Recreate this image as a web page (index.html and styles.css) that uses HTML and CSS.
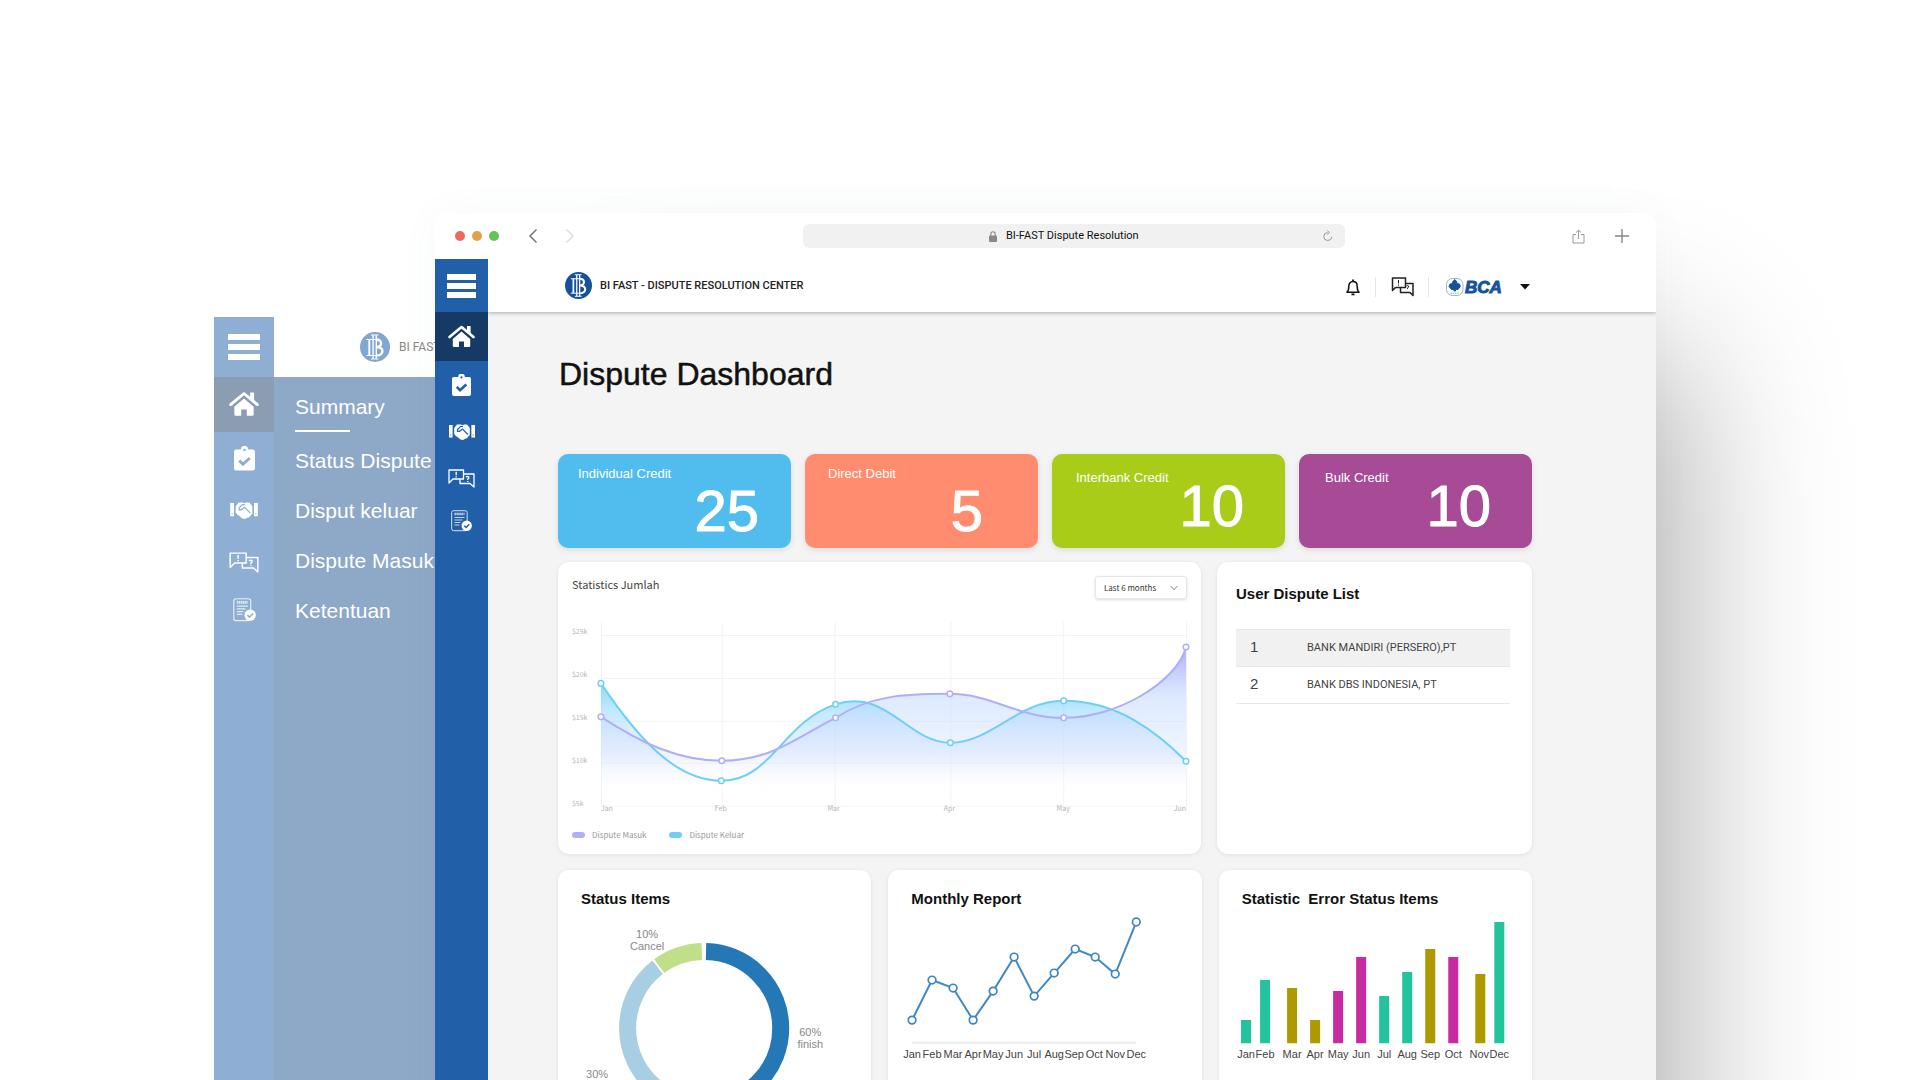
FILE: index.html
```html
<!DOCTYPE html>
<html lang="en">
<head>
<meta charset="utf-8">
<meta name="viewport" content="width=device-width, initial-scale=1">
<title>BI-FAST Dispute Resolution</title>
<link rel="stylesheet" href="styles.css">
</head>
<body>
<svg class="sprite" aria-hidden="true">
  <symbol id="i-home" viewBox="0 0 27 22">
    <path d="M19 1h3.600v8l-3.600-3z" fill="currentColor"/>
    <path d="M1.500 12 13.500 2l12 10" fill="none" stroke="currentColor" stroke-width="2.600" stroke-linecap="round" stroke-linejoin="round"/>
    <path d="M4.800 13.900 13.500 6.500l8.700 7.400V21a1 1 0 0 1-1 1H16v-5.500h-5V22H5.800a1 1 0 0 1-1-1z" fill="currentColor"/>
  </symbol>
  <symbol id="i-task" viewBox="0 0 20 23">
    <path d="M2 3h4.500a3.500 3.500 0 0 1 7 0H18a2 2 0 0 1 2 2v16a2 2 0 0 1-2 2H2a2 2 0 0 1-2-2V5a2 2 0 0 1 2-2z" fill="currentColor"/>
    <circle cx="10" cy="3.500" r="1.200" fill="var(--bar)"/>
    <path d="m5 13.500 3.500 3.500 6.500-6" fill="none" stroke="var(--bar)" stroke-width="2.800"/>
  </symbol>
  <symbol id="i-shake" viewBox="0 0 26 16">
    <path d="M0 1h3.600v12.500H0zM22.400 1H26v12.500h-3.600z" fill="currentColor"/>
    <path d="M1.300 11h1M23.700 11h1" stroke="var(--bar)"/>
    <path d="M5.200 4 8 .500h4l1.500.700L15 .500h3l2.800 3.500V11l-1.300 1.300-1.500 2-2 .500-2 1.200-2.500-.500L9 13.500 6.800 12 5.200 10z" fill="currentColor"/>
    <path d="M14 2.500h-2.500L8.500 5.500v1.800h2l3-2.300 5.500 5.500" fill="none" stroke="var(--bar)" stroke-width="1.200"/>
  </symbol>
  <symbol id="i-chat" viewBox="0 0 27 19">
    <g fill="none" stroke="currentColor" stroke-width="1.300" stroke-linejoin="round">
      <path d="M12 10H5L1 14V1h14.500v4"/>
      <path d="M15.500 5H26v13l-4-3.500H12V10h3.500z"/>
      <path d="M8.200 2.800v3.400M8.200 7.200v1.200M18 8q1.500-1 2.800 0 .5 1-1 2v1M19.800 12v1"/>
    </g>
  </symbol>
  <symbol id="i-doc" viewBox="0 0 21 22">
    <rect x=".700" y=".700" width="15.500" height="20" rx="2" fill="none" stroke="currentColor" opacity=".8"/>
    <path d="M3.500 4h10" stroke="currentColor" stroke-width="2.400" stroke-dasharray="1.400 .5" opacity=".75"/>
    <path d="M3.500 7.500h10M3.500 10h8M3.500 12.500h6M3.500 15h5" stroke="currentColor" stroke-width="1.100" opacity=".75"/>
    <circle cx="15.700" cy="15.700" r="5.200" fill="currentColor"/>
    <path d="m13.200 15.700 1.900 1.800 3.200-3.300" fill="none" stroke="var(--bar)" stroke-width="1.400"/>
  </symbol>
  <symbol id="i-bi" viewBox="0 0 28 28">
    <circle cx="14" cy="14" r="14" fill="currentColor"/>
    <g fill="none" stroke="#fff">
      <path d="M12.200 3v22M15.200 3v22" stroke-width="1.300"/>
      <path d="M10.200 2.800h7M10.200 25.200h7M6 7h9.500M6 22h11" stroke-width="1"/>
      <path d="M8.700 7v15" stroke-width="1.800"/>
      <path d="M15 7c6 0 6.500 7 0 7M15 14c8 0 7.500 8 1 8" stroke-width="2.200"/>
    </g>
  </symbol>
</svg>

<div class="stage">
  <section class="back-window" aria-label="Expanded menu">
    <nav class="rail rail--soft">
      <button class="burger" type="button" aria-label="Menu"><span></span><span></span><span></span></button>
      <a class="rail-item rail-item--active" href="#summary" aria-label="Summary"><svg class="ic-home"><use href="#i-home"/></svg></a>
      <a class="rail-item" href="#status" aria-label="Status Dispute"><svg class="ic-task"><use href="#i-task"/></svg></a>
      <a class="rail-item" href="#keluar" aria-label="Disput keluar"><svg class="ic-shake"><use href="#i-shake"/></svg></a>
      <a class="rail-item" href="#masuk" aria-label="Dispute Masuk"><svg class="ic-chat"><use href="#i-chat"/></svg></a>
      <a class="rail-item rail-item--last" href="#ketentuan" aria-label="Ketentuan"><svg class="ic-doc"><use href="#i-doc"/></svg></a>
    </nav>
    <div class="back-body">
      <div class="back-header">
        <svg class="bi-logo"><use href="#i-bi"/></svg>
        <span class="brand-text">BI FAST - DISPUTE RESOLUTION CENTER</span>
      </div>
      <ul class="menu">
        <li><a class="menu-link menu-link--active" href="#summary">Summary</a></li>
        <li><a class="menu-link" href="#status">Status Dispute</a></li>
        <li><a class="menu-link" href="#keluar">Disput keluar</a></li>
        <li><a class="menu-link" href="#masuk">Dispute Masuk</a></li>
        <li><a class="menu-link" href="#ketentuan">Ketentuan</a></li>
      </ul>
    </div>
  </section>

  <section class="window" aria-label="Browser">
    <div class="titlebar">
      <div class="title-left">
        <div class="lights"><i class="light light--red"></i><i class="light light--amber"></i><i class="light light--green"></i></div>
        <button class="bare" type="button" aria-label="Back"><svg width="10" height="16" viewBox="0 0 10 16"><path d="M8.500 1.500 2 8l6.500 6.500" fill="none" stroke="#777" stroke-width="1.500"/></svg></button>
        <button class="bare" type="button" aria-label="Forward"><svg width="10" height="16" viewBox="0 0 10 16"><path d="M1.500 1.500 8 8l-6.500 6.500" fill="none" stroke="#dcdcdc" stroke-width="1.500"/></svg></button>
      </div>
      <div class="address">
        <label class="address-label" for="url"><svg width="8" height="11" viewBox="0 0 8 11" role="img" aria-label="Address"><rect y="4.500" width="8" height="6.500" rx="1" fill="#888"/><path d="M1.800 5V3a2.200 2.200 0 0 1 4.400 0v2" fill="none" stroke="#888" stroke-width="1.100"/></svg></label>
        <input class="address-input" id="url" type="text" value="BI-FAST Dispute Resolution">
        <button class="bare address-reload" type="button" aria-label="Reload"><svg width="10" height="12" viewBox="0 0 10 12"><path d="M4.500 2.500a4 4 0 1 0 4.300 4.200M4.200.5l2.200 2-2.200 2" fill="none" stroke="#999"/></svg></button>
      </div>
      <div class="title-right">
        <button class="bare" type="button" aria-label="Share"><svg width="13" height="15" viewBox="0 0 13 15"><path d="M4 5.500H1v8.500h11V5.500H9M6.500 10V1.200M4 3.500l2.500-2.300L9 3.500" fill="none" stroke="#999"/></svg></button>
        <button class="bare" type="button" aria-label="New tab"><svg width="14" height="14" viewBox="0 0 14 14"><path d="M7 0v14M0 7h14" stroke="#888" stroke-width="1.400"/></svg></button>
      </div>
    </div>

    <div class="app">
      <nav class="rail rail--strong">
        <button class="burger" type="button" aria-label="Menu"><span></span><span></span><span></span></button>
        <a class="rail-item rail-item--active" href="#summary" aria-label="Summary"><svg class="ic-home"><use href="#i-home"/></svg></a>
        <a class="rail-item" href="#status" aria-label="Status Dispute"><svg class="ic-task"><use href="#i-task"/></svg></a>
        <a class="rail-item" href="#keluar" aria-label="Disput keluar"><svg class="ic-shake"><use href="#i-shake"/></svg></a>
        <a class="rail-item" href="#masuk" aria-label="Dispute Masuk"><svg class="ic-chat"><use href="#i-chat"/></svg></a>
        <a class="rail-item rail-item--last" href="#ketentuan" aria-label="Ketentuan"><svg class="ic-doc"><use href="#i-doc"/></svg></a>
      </nav>

      <div class="page">
        <header class="header">
          <svg class="bi-logo"><use href="#i-bi"/></svg>
          <span class="brand-text">BI FAST - DISPUTE RESOLUTION CENTER</span>
          <div class="tools">
            <button class="bare tool" type="button" aria-label="Notifications"><svg width="14" height="17" viewBox="0 0 14 17"><path d="M1 13.200h12c-1.500-1.200-1.800-2.200-1.800-6C11.200 4.500 9.500 2.500 7 2.500S2.800 4.500 2.800 7.200c0 3.800-.3 4.800-1.800 6z" fill="none" stroke="#111" stroke-width="1.500" stroke-linejoin="round"/><path d="M7 .500v2M5.500 15.300h3" stroke="#111" stroke-width="1.800"/></svg></button>
            <button class="bare tool tool--chat" type="button" aria-label="Messages"><svg width="23" height="20" viewBox="0 0 23 20"><g fill="none" stroke="#222" stroke-width="1.500" stroke-linejoin="round"><path d="M9.500 10.500H4.500L1.500 13.500V1h13v5.500"/><path d="M14.500 6.500H22v12l-3-3H9.500v-5h5z"/><path d="M7.500 3v3.500M7.500 7.500v1.200M15.500 9q1.500-1 2 0t-1 2v1" stroke-width="1"/></g></svg></button>
            <button class="bare account" type="button" aria-label="BCA account">
              <svg width="56" height="18" viewBox="0 0 56 18">
                <rect x=".500" y=".500" width="16.500" height="17" rx="6" fill="#fff" stroke="#8fb6dc"/>
                <path d="M8.700 1.500 11 4l-.5 1.500 3 .5.800 2.500L12 11.500H9.500V13H8v-1.500H5.500L3 8.500 4 6l3-.5L6.500 4z" fill="#15529b" stroke="#15529b" stroke-linejoin="round"/><path d="M4.500 15.200h8.500" stroke="#8fb6dc" stroke-dasharray="1.500 .7"/>
                <text class="bca" x="19" y="15">BCA</text>
              </svg>
              <svg width="10" height="6" viewBox="0 0 10 6"><path d="M0 0h10L5 5.500z" fill="#111"/></svg>
            </button>
          </div>
        </header>

        <main class="main">
          <h1 class="title">Dispute Dashboard</h1>

          <div class="stats">
            <article class="stat stat--blue"><h2 class="stat-label">Individual Credit</h2><p class="stat-value">25</p></article>
            <article class="stat stat--coral"><h2 class="stat-label">Direct Debit</h2><p class="stat-value">5</p></article>
            <article class="stat stat--raised stat--green"><h2 class="stat-label">Interbank Credit</h2><p class="stat-value">10</p></article>
            <article class="stat stat--raised stat--purple"><h2 class="stat-label">Bulk Credit</h2><p class="stat-value">10</p></article>
          </div>

          <div class="middle">
            <section class="card trend">
              <div class="trend-head">
                <h2 class="trend-title">Statistics Jumlah</h2>
                <div class="range">
                  <select class="range-select" aria-label="Range"><option>Last 6 months</option></select>
                  <svg class="range-arrow" width="8" height="6" viewBox="0 0 8 6"><path d="m.700 1 3.300 3.800L7.300 1" fill="none" stroke="#888"/></svg>
                </div>
              </div>
              <svg class="trend-chart" viewBox="0 0 644 204" role="img" aria-label="Disputes by month">
                <defs>
                  <linearGradient id="gc" gradientUnits="userSpaceOnUse" x1="0" y1="70" x2="0" y2="185"><stop offset="0" stop-color="#5ecdf3" stop-opacity=".75"/><stop offset=".25" stop-color="#8fd6ff" stop-opacity=".55"/><stop offset=".6" stop-color="#bcd8ff" stop-opacity=".3"/><stop offset="1" stop-color="#fff" stop-opacity="0"/></linearGradient>
                  <linearGradient id="gp" gradientUnits="userSpaceOnUse" x1="0" y1="35" x2="0" y2="180"><stop offset="0" stop-color="#a9a6fb" stop-opacity=".95"/><stop offset=".35" stop-color="#bcd5ff" stop-opacity=".5"/><stop offset=".75" stop-color="#d4e0ff" stop-opacity=".35"/><stop offset="1" stop-color="#fff" stop-opacity="0"/></linearGradient>
                </defs>
                <path d="M43.500 23.500h586M43.500 66.500h586M43.500 109.500h586M43.500 151.500h586M43.500 194.500h586M43.500 10v185M164.500 10v185M277.500 10v185M393.500 10v185M506.500 10v185M629.500 10v185" stroke="#f0f3f4" fill="none"/>
                <path d="M43 71.500C83 131 120 169 163.500 169C214 169 225 110 278 92.500C330 76 350 131 393 131C434 131 460 89 506.500 89C560 89 600 120 629 149.500V195H43z" fill="url(#gc)"/>
                <path d="M43 105C83 131 120 149 164 149C214 149 240 125 278 106C312 84 345 82 392.500 82C435 82 460 106 506.500 106C560 106 620 70 629 35V195H43z" fill="url(#gp)"/>
                <path d="M43 71.500C83 131 120 169 163.500 169C214 169 225 110 278 92.500C330 76 350 131 393 131C434 131 460 89 506.500 89C560 89 600 120 629 149.500" fill="none" stroke="#6fcff5" stroke-width="2"/>
                <path d="M43 105C83 131 120 149 164 149C214 149 240 125 278 106C312 84 345 82 392.500 82C435 82 460 106 506.500 106C560 106 620 70 629 35" fill="none" stroke="#b0aefb" stroke-width="2"/>
                <g fill="#fff" stroke="#6fcff5" stroke-width="1.500"><circle cx="43" cy="71.500" r="2.800"/><circle cx="163.500" cy="169" r="2.800"/><circle cx="278" cy="92.500" r="2.800"/><circle cx="393" cy="131" r="2.800"/><circle cx="506.500" cy="89" r="2.800"/><circle cx="629" cy="149.500" r="2.800"/></g>
                <g fill="#fff" stroke="#b0aefb" stroke-width="1.500"><circle cx="43" cy="105" r="2.800"/><circle cx="164" cy="149" r="2.800"/><circle cx="278" cy="106" r="2.800"/><circle cx="392.500" cy="82" r="2.800"/><circle cx="506.500" cy="106" r="2.800"/><circle cx="629" cy="35" r="2.800"/></g>
                <g class="tiny"><text x="14" y="22">$25k</text><text x="14" y="65">$20k</text><text x="14" y="108">$15k</text><text x="14" y="151">$10k</text><text x="14" y="194">$5k</text>
                <text x="43" y="199">Jan</text><text x="163" y="199" text-anchor="middle">Feb</text><text x="276" y="199" text-anchor="middle">Mar</text><text x="392" y="199" text-anchor="middle">Apr</text><text x="506" y="199" text-anchor="middle">May</text><text x="629" y="199" text-anchor="end">Jun</text></g>
              </svg>
              <ul class="legend"><li class="legend-item"><i class="swatch swatch--masuk"></i>Dispute Masuk</li><li class="legend-item"><i class="swatch swatch--keluar"></i>Dispute Keluar</li></ul>
            </section>

            <section class="card users">
              <h2 class="card-title">User Dispute List</h2>
              <table class="user-table">
                <tbody>
                  <tr class="shaded"><th scope="row">1</th><td>BANK MANDIRI (PERSERO),PT</td></tr>
                  <tr><th scope="row">2</th><td>BANK DBS INDONESIA, PT</td></tr>
                </tbody>
              </table>
            </section>
          </div>

          <div class="bottom">
            <section class="card panel">
              <h2 class="card-title">Status Items</h2>
              <svg class="plot plot--grey" viewBox="0 0 313 220" role="img" aria-label="Status share">
                <g fill="none" stroke-width="17" transform="rotate(-90 146 118)">
                  <circle cx="146" cy="118" r="76.500" pathLength="100" stroke="#2478b5" stroke-dasharray="59.200 40.800" stroke-dashoffset="-.4"/>
                  <circle cx="146" cy="118" r="76.500" pathLength="100" stroke="#a8cee3" stroke-dasharray="29.600 70.400" stroke-dashoffset="-60"/>
                  <circle cx="146" cy="118" r="76.500" pathLength="100" stroke="#bfdf88" stroke-dasharray="9.500 90.500" stroke-dashoffset="-90"/>
                </g>
                <g text-anchor="middle"><text x="89" y="28">10%</text><text x="89" y="40">Cancel</text><text x="252" y="126">60%</text><text x="252" y="138">finish</text><text x="39" y="168">30%</text></g>
              </svg>
            </section>

            <section class="card panel">
              <h2 class="card-title">Monthly Report</h2>
              <svg class="plot" viewBox="0 0 313 220" role="img" aria-label="Monthly report">
                <path d="M24 132.500h224" stroke="#ececec" stroke-width="2"/>
                <path d="M24 110 44 70 65 78 85 110 105 81 126 47 146 86 166 63 187 39 207 47 227 64 248 12" fill="none" stroke="#4089c5" stroke-width="2"/>
                <g fill="#fff" stroke="#3d86c3" stroke-width="1.700"><circle cx="24" cy="110" r="3.800"/><circle cx="44" cy="70" r="3.800"/><circle cx="65" cy="78" r="3.800"/><circle cx="85" cy="110" r="3.800"/><circle cx="105" cy="81" r="3.800"/><circle cx="126" cy="47" r="3.800"/><circle cx="146" cy="86" r="3.800"/><circle cx="166" cy="63" r="3.800"/><circle cx="187" cy="39" r="3.800"/><circle cx="207" cy="47" r="3.800"/><circle cx="227" cy="64" r="3.800"/><circle cx="248" cy="12" r="3.800"/></g>
                <g text-anchor="middle"><text x="24" y="148">Jan</text><text x="44" y="148">Feb</text><text x="65" y="148">Mar</text><text x="85" y="148">Apr</text><text x="105" y="148">May</text><text x="126" y="148">Jun</text><text x="146" y="148">Jul</text><text x="166" y="148">Aug</text><text x="186" y="148">Sep</text><text x="206" y="148">Oct</text><text x="227" y="148">Nov</text><text x="248" y="148">Dec</text></g>
              </svg>
            </section>

            <section class="card panel">
              <h2 class="card-title">Statistic&nbsp; Error Status Items</h2>
              <svg class="plot" viewBox="0 0 313 220" role="img" aria-label="Error status items">
                <path fill="#23c49c" d="M22 110h10v23h-10zM41 70h10v63h-10zM160 86h10v47h-10zM183 62h10v71h-10zM275 12h10v121h-10z"/>
                <path fill="#ae9a00" d="M68 78h10v55h-10zM91 110h10v23h-10zM206 39h10v94h-10zM256 64h10v69h-10z"/>
                <path fill="#c62ba2" d="M114 81h10v52h-10zM137 47h10v86h-10zM229 47h10v86h-10z"/>
                <g text-anchor="middle"><text x="27" y="148">Jan</text><text x="46" y="148">Feb</text><text x="73" y="148">Mar</text><text x="96" y="148">Apr</text><text x="119" y="148">May</text><text x="142" y="148">Jun</text><text x="165" y="148">Jul</text><text x="188" y="148">Aug</text><text x="211" y="148">Sep</text><text x="234" y="148">Oct</text><text x="260" y="148">Nov</text><text x="280" y="148">Dec</text></g>
              </svg>
            </section>
          </div>
        </main>
      </div>
    </div>
  </section>
</div>
</body>
</html>
```
FILE: styles.css
```css
* { box-sizing: border-box; }
body, h1, h2, p, ul { margin: 0; padding: 0; }
body { background: #fff; font-family: "Liberation Sans", Arial, sans-serif; color: #111; }
ul { list-style: none; }
a { color: inherit; text-decoration: none; }
svg { display: block; flex: none; }
.sprite { position: absolute; width: 0; height: 0; }
.bare { border: 0; padding: 0; background: none; cursor: pointer; }

/* two overlapping windows share one grid */
.stage {
  display: grid;
  grid-template-columns: 214fr 221fr 1221fr 264fr;
  grid-template-rows: 213px 104px minmax(0, 1fr);
  height: 100vh;
  overflow: hidden;
}
.back-window { grid-column: 2 / 4; grid-row: 3; display: flex; min-width: 0; }
.window {
  grid-column: 3; grid-row: 2 / 4;
  display: flex; flex-direction: column;
  min-width: 0;
  margin-bottom: -300px;
  z-index: 1;
  border-radius: 12px;
  background: #fff;
  box-shadow: 100px 70px 150px -70px rgba(0, 0, 0, .3), 0 0 40px rgba(60, 100, 140, .04);
}

/* icon rails */
.rail { display: flex; flex-direction: column; flex: none; color: #fff; background: var(--bar); }
.rail--soft { --bar: #8faed3; --active: #8a9db3; --item: 52px; --last: 44px; width: 60px; }
.rail--strong { --bar: #2160a8; --active: #163a66; --item: 47px; --last: 38px; width: 53px; }
.burger { display: flex; flex-direction: column; align-items: center; justify-content: center; border: 0; padding: 0; background: none; }
.burger span { background: #fff; }
.rail--soft .burger { height: 60px; gap: 4px; }
.rail--soft .burger span { width: 32px; height: 6px; }
.rail--strong .burger { height: 53px; gap: 3px; }
.rail--strong .burger span { width: 29px; height: 6px; }
.rail-item { display: flex; align-items: center; justify-content: center; height: var(--item); }
.rail-item--last { height: var(--last); }
.rail-item--active { background: var(--active); padding-bottom: 2px; }
.rail--soft .rail-item--active { height: 55px; }
.rail--strong .rail-item--active { height: 49px; }
.ic-home { width: 27px; height: 22px; }
.ic-task { width: 19px; height: 22px; }
.ic-shake { width: 26px; height: 16px; }
.ic-chat { width: 27px; height: 19px; }
.ic-doc { width: 21px; height: 22px; }
.rail--soft .ic-home { width: 30px; height: 25px; }
.rail--soft .ic-task { width: 21px; height: 25px; }
.rail--soft .ic-shake { width: 28px; height: 17px; }
.rail--soft .ic-chat { width: 30px; height: 21px; }
.rail--soft .ic-doc { width: 23px; height: 24px; }

/* rear window */
.back-body { flex: 1; min-width: 0; display: flex; flex-direction: column; }
.back-header { display: flex; align-items: center; gap: 9px; height: 60px; padding-left: 86px; color: #80a7cf; }
.back-header .bi-logo { width: 30px; height: 30px; }
.back-header .brand-text { color: #888; font-size: 12px; font-weight: 400; }
.menu { flex: 1; display: flex; flex-direction: column; padding: 12px 0 0 21px; background: #8ea8c8; color: #fff; }
.menu li { height: 50px; line-height: 36px; font-size: 21px; }
.menu li:first-child { height: 54px; }
.menu-link--active { display: block; height: 43px; }
.menu-link--active::after { content: ""; display: block; width: 55px; height: 2px; margin-top: 5px; background: #fff; }

/* browser chrome */
.titlebar { display: grid; grid-template-columns: 368fr 543fr 311fr; align-items: center; height: 46px; }
.title-left { display: flex; align-items: center; padding-left: 20px; gap: 27px; }
.lights { display: flex; gap: 7px; margin-right: 2px; }
.light { width: 10px; height: 10px; border-radius: 50%; }
.light--red { background: #ec6a5e; }
.light--amber { background: #e0a04c; }
.light--green { background: #61c454; }
.address { display: grid; grid-template-columns: 1fr 136px 1fr; align-items: center; column-gap: 9px; height: 24px; padding: 0 12px; border-radius: 6px; background: #f1f1f1; }
.address-label { justify-self: end; }
.address-input { width: 100%; border: 0; padding: 0; background: none; font: 11px/16px Roboto, "Liberation Sans", sans-serif; color: #111; }
.address-reload { justify-self: end; }
.title-right { display: flex; justify-content: flex-end; align-items: center; gap: 30px; padding-right: 27px; }

.app { flex: 1; display: flex; min-height: 0; }
.page { flex: 1; min-width: 0; display: flex; flex-direction: column; }
.header { display: flex; align-items: center; gap: 8px; height: 53px; padding: 0 126px 0 77px; background: #fff; color: #15529b; box-shadow: 0 1px 4px rgba(0, 0, 0, .3); clip-path: inset(0 0 -6px 0); z-index: 1; }
.bi-logo { width: 27px; height: 27px; }
.brand-text { font: 500 11px/16px Roboto, sans-serif; color: #222; white-space: nowrap; }
.tools { display: flex; align-items: center; margin-left: auto; padding-top: 3px; }
.tool { display: flex; align-items: center; height: 20px; padding-right: 15px; border-right: 1px solid #e5e5e5; }
.tool--chat { padding-left: 15px; padding-right: 14px; }
.account { display: flex; align-items: center; gap: 18px; padding-left: 17px; }
.bca { font: italic bold 17px "Liberation Sans", sans-serif; fill: #15529b; stroke: #15529b; stroke-width: 1px; }

/* dashboard */
.main { flex: 1; padding: 42px 124px 0 70px; background: #f4f4f4; }
.title { font-size: 32px; line-height: 40px; font-weight: 400; -webkit-text-stroke: .5px #111; margin-bottom: 60px; padding-left: 1px; }
.stats { display: grid; grid-template-columns: repeat(4, 1fr); gap: 14px; }
.stat { display: flex; justify-content: space-between; height: 94px; padding: 0 32px 0 20px; border-radius: 10px; color: #fff; box-shadow: 0 2px 6px rgba(0, 0, 0, .1); }
.stat-label { padding-top: 12px; font-size: 13px; line-height: 16px; font-weight: 400; white-space: nowrap; }
.stat-value { padding-top: 29px; font-size: 58px; line-height: 56px; -webkit-text-stroke: 1px #fff; }
.stat--raised { padding: 0 41px 0 24px; }
.stat--raised .stat-label { padding-top: 16px; }
.stat--raised .stat-value { padding-top: 24px; }
.stat--blue { background: #50bdee; }
.stat--coral { background: #ff8c6e; padding-right: 55px; padding-left: 23px; }
.stat--green { background: #a8cc18; }
.stat--purple { background: #a84b96; padding-left: 26px; }

.card { border-radius: 11px; background: #fff; box-shadow: 0 1px 4px rgba(0, 0, 0, .09); }
.card-title { font-size: 15px; line-height: 20px; font-weight: 700; }
.middle { display: grid; grid-template-columns: 643fr 315fr; gap: 16px; margin: 14px 0 16px; }
.trend { min-height: 292px; font-family: "Noto Sans CJK SC", "Noto Sans", sans-serif; }
.trend-head { display: flex; justify-content: space-between; align-items: flex-start; height: 50px; padding: 14px 14px 0; }
.trend-title { font-size: 11px; line-height: 16px; font-weight: 400; color: #444; }
.range { display: flex; align-items: center; width: 92px; height: 23px; padding: 0 8px; border: 1px solid #e6e6e6; border-radius: 3px; box-shadow: 0 1px 3px rgba(0, 0, 0, .14); }
.range-select { flex: 1; min-width: 0; border: 0; padding: 0; appearance: none; background: none; font: 8px/14px "Noto Sans CJK SC", sans-serif; color: #333; }
.trend-chart { width: 100%; }
.tiny { font-size: 7px; fill: #b5b5b5; }
.legend { display: flex; gap: 23px; padding: 11px 14px 0; font-size: 8px; line-height: 16px; color: #999; }
.legend-item { display: flex; align-items: center; gap: 7px; }
.swatch { width: 13px; height: 6px; border-radius: 3px; }
.swatch--masuk { background: #b0aefb; }
.swatch--keluar { background: #6fcff5; }

.users { padding: 22px 22px 0 19px; }
.user-table { width: 100%; margin-top: 25px; border-collapse: collapse; text-align: left; color: #444; }
.user-table tr { height: 37px; border: solid #e8e8e8; border-width: 1px 0; }
.user-table th { width: 71px; padding: 0 0 4px 14px; font-size: 15px; font-weight: 400; }
.user-table td { padding: 0 0 1px; font: 11px/16px Roboto, sans-serif; }
.shaded { background: #f1f1f1; }

.bottom { display: grid; grid-template-columns: repeat(3, 1fr); gap: 17px; }
.panel { padding-top: 19px; }
.panel .card-title { padding-left: 23px; margin-bottom: 1px; }
.plot { width: 100%; font-size: 11px; fill: #444; }
.plot--grey { fill: #888; }
```
